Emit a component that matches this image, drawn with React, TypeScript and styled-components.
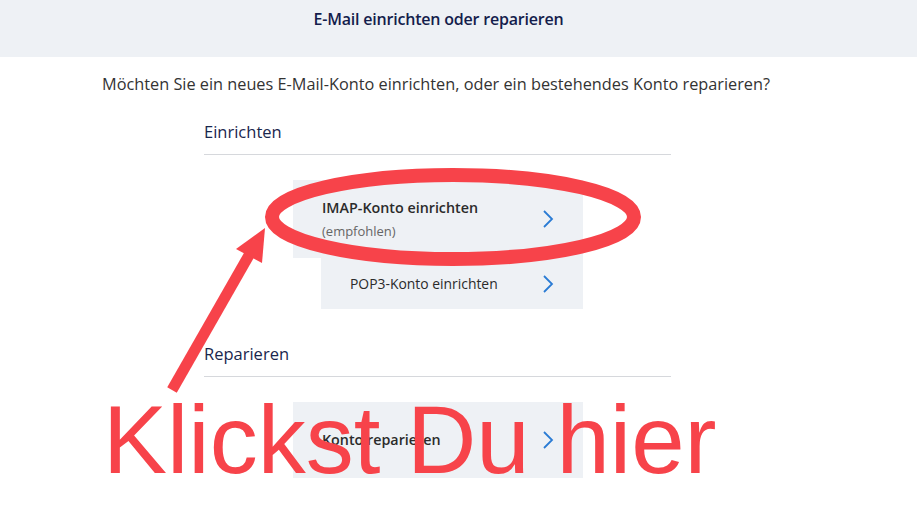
import styled, { createGlobalStyle } from "styled-components";

const GlobalStyle = createGlobalStyle`
  body {
    margin: 0;
    background: #fff;
    font-family: "Open Sans", "Noto Sans", sans-serif;
  }
`;

const StyledPage = styled.div`
  position: relative;
  width: 917px;
  height: 507px;
  overflow: hidden;
`;

const StyledHeader = styled.header`
  height: 57px;
  background-color: #eef1f5;
  display: flex;
  justify-content: center;
  padding: 8px 40px 0 0;
  box-sizing: border-box;
`;

const StyledTitle = styled.h1`
  margin: 0;
  font-size: 16px;
  line-height: 22px;
  font-weight: 600;
  color: #141d4c;
  letter-spacing: -0.2px;
`;

const StyledMain = styled.main`
  padding-left: 102px;
`;

const StyledQuestion = styled.p`
  margin: 16px 0 0;
  font-size: 16.3px;
  line-height: 22px;
  color: #333;
`;

const StyledSection = styled.section<{ $top: number }>`
  margin: ${({ $top }) => $top}px 0 0 102px;
  width: 467px;
`;

const StyledHeading = styled.h2`
  margin: 0;
  padding-bottom: 11px;
  border-bottom: 1px solid #d6d8dc;
  font-size: 16.5px;
  line-height: 22px;
  font-weight: 400;
  color: #19264d;
`;

const StyledList = styled.div`
  margin-top: 25px;
  display: flex;
  flex-direction: column;
`;

const StyledOption = styled.div<{ $indent: number; $height: number }>`
  margin-left: ${({ $indent }) => $indent}px;
  width: ${({ $indent }) => 379 - $indent}px;
  height: ${({ $height }) => $height}px;
  box-sizing: border-box;
  padding: 0 29px 0 29px;
  background-color: #eef1f5;
  display: flex;
  align-items: center;
  justify-content: space-between;
`;

const StyledLabel = styled.div`
  display: flex;
  flex-direction: column;
  gap: 3px;
`;

const StyledOptionTitle = styled.span<{ $bold?: boolean }>`
  font-size: ${({ $bold }) => ($bold ? 14.3 : 13.9)}px;
  line-height: 20px;
  font-weight: ${({ $bold }) => ($bold ? 600 : 400)};
  color: #2b2b2b;
`;

const StyledHint = styled.span`
  font-size: 13px;
  line-height: 20px;
  color: #666;
`;

const StyledOverlay = styled.svg`
  position: absolute;
  left: 0;
  top: 0;
  pointer-events: none;
`;

const StyledCallout = styled.div`
  position: absolute;
  left: 103px;
  top: 385px;
  font-family: "Liberation Sans", Arial, sans-serif;
  font-size: 96px;
  line-height: 110px;
  color: #f7434a;
  white-space: nowrap;
  pointer-events: none;
`;

function Chevron() {
  return (
    <svg width="12" height="20" viewBox="0 0 12 20">
      <path d="M2 2 L10 10 L2 18" fill="none" stroke="#2a7bd4" strokeWidth="1.8" />
    </svg>
  );
}

export default function App() {
  return (
    <StyledPage>
      <GlobalStyle />
      <StyledHeader>
        <StyledTitle>E-Mail einrichten oder reparieren</StyledTitle>
      </StyledHeader>
      <StyledMain>
        <StyledQuestion>
          Möchten Sie ein neues E-Mail-Konto einrichten, oder ein bestehendes Konto reparieren?
        </StyledQuestion>
        <StyledSection $top={26}>
          <StyledHeading>Einrichten</StyledHeading>
          <StyledList>
            <StyledOption $indent={89} $height={78}>
              <StyledLabel>
                <StyledOptionTitle $bold>IMAP-Konto einrichten</StyledOptionTitle>
                <StyledHint>(empfohlen)</StyledHint>
              </StyledLabel>
              <Chevron />
            </StyledOption>
            <StyledOption $indent={117} $height={51}>
              <StyledOptionTitle>POP3-Konto einrichten</StyledOptionTitle>
              <Chevron />
            </StyledOption>
          </StyledList>
        </StyledSection>
        <StyledSection $top={34}>
          <StyledHeading>Reparieren</StyledHeading>
          <StyledList>
            <StyledOption $indent={89} $height={76}>
              <StyledOptionTitle $bold>Konto reparieren</StyledOptionTitle>
              <Chevron />
            </StyledOption>
          </StyledList>
        </StyledSection>
      </StyledMain>
      <StyledOverlay width="917" height="507" viewBox="0 0 917 507">
        <ellipse cx="453" cy="217" rx="181" ry="42" fill="none" stroke="#f7434a" strokeWidth="14" />
        <line x1="172" y1="390" x2="252" y2="250" stroke="#f7434a" strokeWidth="11" />
        <polygon points="265,228 236,249 262,263" fill="#f7434a" />
      </StyledOverlay>
      <StyledCallout>Klickst Du hier</StyledCallout>
    </StyledPage>
  );
}
